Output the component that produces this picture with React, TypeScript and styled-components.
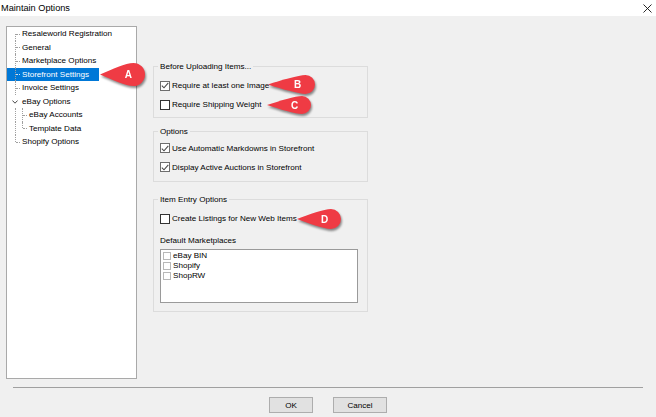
import React from "react";
import styled, { createGlobalStyle } from "styled-components";

type Kind = "first" | "tee" | "last" | "pipe" | "chevron";

interface TreeItem {
  label: string;
  cells: Kind[];
  selected?: boolean;
}

const treeItems: TreeItem[] = [
  { label: "Resaleworld Registration", cells: ["first"] },
  { label: "General", cells: ["tee"] },
  { label: "Marketplace Options", cells: ["tee"] },
  { label: "Storefront Settings", cells: ["tee"], selected: true },
  { label: "Invoice Settings", cells: ["tee"] },
  { label: "eBay Options", cells: ["chevron"] },
  { label: "eBay Accounts", cells: ["pipe", "tee"] },
  { label: "Template Data", cells: ["pipe", "last"] },
  { label: "Shopify Options", cells: ["last"] },
];

const callouts = [
  { letter: "A", x: 100, y: 63, w: 45, h: 23 },
  { letter: "B", x: 268, y: 75, w: 47, h: 19 },
  { letter: "C", x: 267, y: 96, w: 44, h: 18 },
  { letter: "D", x: 297, y: 209, w: 44, h: 20 },
];

const GlobalStyle = createGlobalStyle`
  * { box-sizing: border-box; }
  html, body { margin: 0; padding: 0; background: #f0f0f0; }
  body {
    font-family: "Liberation Sans", Arial, sans-serif;
    font-size: 8.1px;
    color: #000;
  }
`;

const Window = styled.div`
  position: relative;
  width: 656px;
  height: 417px;
  display: flex;
  flex-direction: column;
  background: #f0f0f0;
  overflow: hidden;
`;

const TitleBar = styled.div`
  flex: none;
  height: 16px;
  background: #fff;
  display: flex;
  align-items: center;
  justify-content: space-between;
  padding: 0 4px 0 1px;
  font-size: 9.2px;
`;

const Main = styled.div`
  flex: 1;
  display: flex;
  align-items: flex-start;
  padding: 10px 0 0 6px;
`;

const Tree = styled.div`
  width: 131px;
  height: 353px;
  background: #fff;
  border: 1px solid #a9a9a9;
  display: flex;
  flex-direction: column;
  align-items: flex-start;
`;

const TreeRow = styled.div<{ $selected?: boolean }>`
  display: flex;
  height: 13.5px;
  line-height: 13.5px;
  padding: 0 10px 0 8px;
  white-space: nowrap;
  background: ${(p) => (p.$selected ? "#0078d7" : "transparent")};
  color: ${(p) => (p.$selected ? "#fff" : "#000")};
`;

const Cell = styled.span<{ $kind: Kind; $light?: boolean }>`
  position: relative;
  flex: none;
  width: 7px;
  align-self: stretch;

  &::before {
    content: "";
    position: absolute;
    left: 0;
    top: ${(p) => (p.$kind === "first" ? "50%" : "0")};
    bottom: ${(p) => (p.$kind === "last" ? "50%" : "0")};
    border-left: 1px dotted #a0a0a0;
    display: ${(p) => (p.$kind === "chevron" ? "none" : "block")};
  }

  &::after {
    content: "";
    position: absolute;
    left: 1px;
    top: 50%;
    width: 4px;
    border-top: 1px dotted ${(p) => (p.$light ? "#cfe3f7" : "#a0a0a0")};
    display: ${(p) => (p.$kind === "pipe" || p.$kind === "chevron" ? "none" : "block")};
  }
`;

const Chevron = styled.svg`
  position: absolute;
  left: -3px;
  top: 5px;
`;

const Content = styled.div`
  margin-left: 16px;
  padding-top: 35px;
  width: 215px;
  display: flex;
  flex-direction: column;
`;

const Group = styled.fieldset<{ $mt: number; $pt: number; $pb: number }>`
  margin: ${(p) => p.$mt}px 0 0;
  padding: ${(p) => p.$pt}px 6px ${(p) => p.$pb}px;
  border: 1px solid #dcdcdc;
  min-width: 0;
`;

const Legend = styled.legend`
  padding: 0 2px;
  margin-left: -2px;
  line-height: 11px;
`;

const CheckRow = styled.div`
  display: flex;
  align-items: center;
  gap: 2px;
  height: 19px;
`;

const CheckBox = styled.span<{ $checked?: boolean }>`
  width: 10px;
  height: 10px;
  flex: none;
  background: #fff;
  border: 1px solid ${(p) => (p.$checked ? "#6e6e6e" : "#333")};
  display: flex;
  align-items: center;
  justify-content: center;
`;

const FieldLabel = styled.div`
  margin-top: 7px;
  line-height: 11px;
`;

const ListBox = styled.div`
  margin-top: 2.5px;
  width: 198px;
  height: 54px;
  background: #fff;
  border: 1px solid #9a9a9a;
  padding: 1px 0 0 2px;
`;

const ListItem = styled.div`
  display: flex;
  align-items: center;
  gap: 2px;
  height: 10px;
`;

const SmallBox = styled.span`
  width: 8px;
  height: 8px;
  flex: none;
  background: #fff;
  border: 1px solid #b8b8b8;
`;

const Footer = styled.div`
  flex: none;
  height: 30px;
  margin: 0 13px;
  border-top: 1px solid #a0a0a0;
  padding-top: 9px;
  display: flex;
  justify-content: center;
  gap: 20px;
`;

const Button = styled.button<{ $w: number }>`
  width: ${(p) => p.$w}px;
  height: 16px;
  padding: 0;
  background: #e1e1e1;
  border: 1px solid #adadad;
  font-family: inherit;
  font-size: 8.1px;
  color: #000;
`;

const CalloutWrap = styled.div<{ $x: number; $y: number }>`
  position: absolute;
  left: ${(p) => p.$x}px;
  top: ${(p) => p.$y}px;
  filter: drop-shadow(1px 2px 1.2px rgba(0, 0, 0, 0.45));
  pointer-events: none;
`;

const Check = () => (
  <svg width="8" height="7" viewBox="0 0 8 7">
    <path d="M0.8 3.6 L3 5.8 L7.3 0.9" fill="none" stroke="#4a4a4a" strokeWidth="1.1" />
  </svg>
);

const Option = ({ label, checked }: { label: string; checked?: boolean }) => (
  <CheckRow>
    <CheckBox $checked={checked}>{checked && <Check />}</CheckBox>
    <span>{label}</span>
  </CheckRow>
);

const Callout = ({ letter, x, y, w, h }: { letter: string; x: number; y: number; w: number; h: number }) => {
  const r = h / 2;
  const cx = w - r;
  const d = `M0 ${r} C ${w * 0.28} ${r - r * 0.45}, ${cx - r * 0.7} 0, ${cx} 0 A ${r} ${r} 0 0 1 ${cx} ${h} C ${cx - r * 0.7} ${h}, ${w * 0.28} ${r + r * 0.45}, 0 ${r} Z`;
  return (
    <CalloutWrap $x={x} $y={y}>
      <svg width={w} height={h} viewBox={`0 0 ${w} ${h}`}>
        <path d={d} fill="#ef3b44" />
        <text
          x={w * 0.63}
          y={r + 3.6}
          textAnchor="middle"
          fontFamily="Liberation Sans, Arial, sans-serif"
          fontSize="10"
          fontWeight="bold"
          fill="#fff"
        >
          {letter}
        </text>
      </svg>
    </CalloutWrap>
  );
};

export default function App() {
  return (
    <>
      <GlobalStyle />
      <Window>
        <TitleBar>
          <span>Maintain Options</span>
          <svg width="9" height="9" viewBox="0 0 9 9">
            <path d="M0.5 0.5 L8.5 8.5 M8.5 0.5 L0.5 8.5" stroke="#111" strokeWidth="0.9" />
          </svg>
        </TitleBar>

        <Main>
          <Tree>
            {treeItems.map((item) => (
              <TreeRow key={item.label} $selected={item.selected}>
                {item.cells.map((kind, i) => (
                  <Cell key={i} $kind={kind} $light={item.selected}>
                    {kind === "chevron" && (
                      <Chevron width="6" height="4" viewBox="0 0 6 4">
                        <path d="M0.4 0.5 L3 3.2 L5.6 0.5" fill="none" stroke="#333" strokeWidth="0.9" />
                      </Chevron>
                    )}
                  </Cell>
                ))}
                <span>{item.label}</span>
              </TreeRow>
            ))}
          </Tree>

          <Content>
            <Group $mt={0} $pt={4} $pb={3}>
              <Legend>Before Uploading Items...</Legend>
              <Option label="Require at least one Image" checked />
              <Option label="Require Shipping Weight" />
            </Group>

            <Group $mt={8} $pt={1.5} $pb={4}>
              <Legend>Options</Legend>
              <Option label="Use Automatic Markdowns in Storefront" checked />
              <Option label="Display Active Auctions in Storefront" checked />
            </Group>

            <Group $mt={12} $pt={4.5} $pb={8}>
              <Legend>Item Entry Options</Legend>
              <Option label="Create Listings for New Web Items" />
              <FieldLabel>Default Marketplaces</FieldLabel>
              <ListBox>
                {["eBay BIN", "Shopify", "ShopRW"].map((m) => (
                  <ListItem key={m}>
                    <SmallBox />
                    <span>{m}</span>
                  </ListItem>
                ))}
              </ListBox>
            </Group>
          </Content>
        </Main>

        <Footer>
          <Button $w={44}>OK</Button>
          <Button $w={54}>Cancel</Button>
        </Footer>

        {callouts.map((c) => (
          <Callout key={c.letter} {...c} />
        ))}
      </Window>
    </>
  );
}
